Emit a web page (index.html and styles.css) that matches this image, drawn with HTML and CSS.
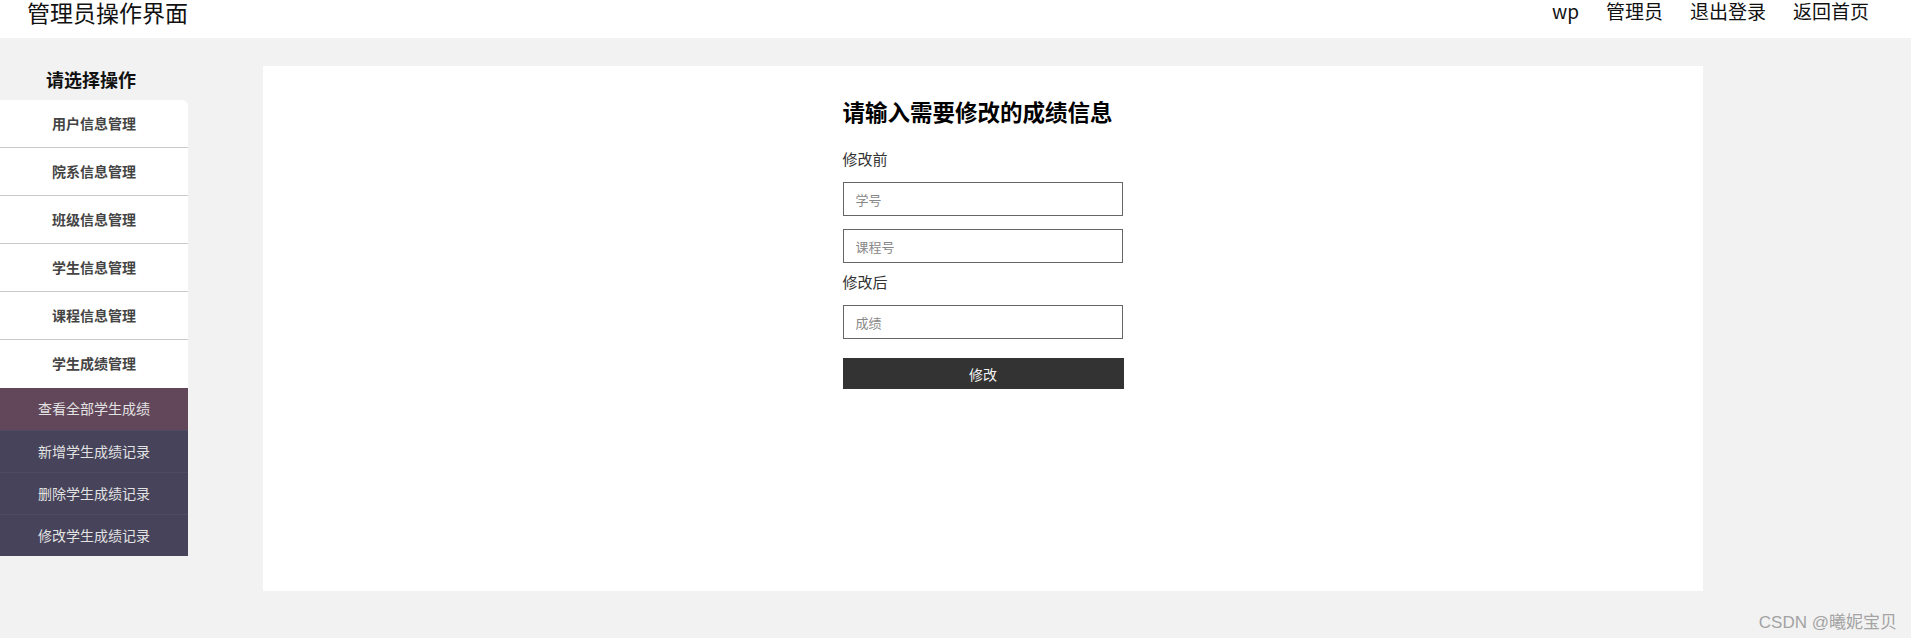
FILE: index.html
```html
<!DOCTYPE html>
<html lang="zh-CN">
<head>
  <meta charset="UTF-8">
  <title>管理员操作界面</title>
  <link rel="stylesheet" href="styles.css">
</head>
<body>

  <!-- 顶部 -->
  <div class="header">
    <div class="title">管理员操作界面</div>
    <div class="user-nav">
      <span>wp</span>
      <span>管理员</span>
      <span>退出登录</span>
      <span>返回首页</span>
    </div>
  </div>

  <div class="container">
    <!-- 左侧菜单 -->
    <div class="sidebar">
      <div class="sidebar-title">请选择操作</div>
      <ul class="menu">
        <li>用户信息管理</li>
        <li>院系信息管理</li>
        <li>班级信息管理</li>
        <li>学生信息管理</li>
        <li>课程信息管理</li>
        <li class="last">学生成绩管理</li>
      </ul>
      <ul class="submenu">
        <li class="current">查看全部学生成绩</li>
        <li>新增学生成绩记录</li>
        <li>删除学生成绩记录</li>
        <li>修改学生成绩记录</li>
      </ul>
    </div>

    <!-- 右侧内容 -->
    <div class="content">
      <form class="edit-form" onsubmit="return false">
        <h2>请输入需要修改的成绩信息</h2>
        <p class="label first">修改前</p>
        <input type="text" placeholder="学号">
        <input type="text" class="gap" placeholder="课程号">
        <p class="label">修改后</p>
        <input type="text" placeholder="成绩">
        <button type="submit">修改</button>
      </form>
    </div>
  </div>

  <div class="watermark">CSDN @曦妮宝贝</div>

</body>
</html>
```

FILE: styles.css
```css
* {
  box-sizing: border-box;
}
body {
  margin: 0;
  padding: 0;
  background: #f2f2f2;
  font-family: "Noto Sans CJK SC", sans-serif;
  color: #333;
  height: 638px;
  overflow: hidden;
}

/* 顶部 */
.header {
  height: 38px;
  background: #fff;
  display: flex;
  justify-content: space-between;
  align-items: flex-start;
  padding: 0 42px 0 27px;
}
.header .title {
  font-size: 23px;
  line-height: 24px;
  color: #111;
}
.user-nav {
  display: flex;
  gap: 27px;
  font-size: 19px;
  line-height: 21px;
  color: #111;
}

/* 主体 */
.container {
  display: flex;
  align-items: flex-start;
}
.sidebar {
  width: 188px;
}
.sidebar-title {
  padding: 28px 6px 0 0;
  margin-bottom: 8px;
  line-height: 26px;
  font-size: 18px;
  font-weight: bold;
  text-align: center;
  color: #111;
}
.menu, .submenu {
  list-style: none;
  margin: 0;
  padding: 0;
}
.menu {
  background: #fff;
  border-top-right-radius: 6px;
}
.menu li {
  height: 48px;
  line-height: 46px;
  border-bottom: 1px solid #c9c9c9;
  text-align: center;
  font-size: 14px;
  font-weight: bold;
  color: #444;
}
.menu li.last {
  border-bottom: none;
  line-height: 47px;
}
.submenu {
  background: #46435a;
}
.submenu li {
  height: 42px;
  line-height: 41px;
  text-align: center;
  font-size: 14px;
  color: #e2e2e2;
  border-top: 1px solid #4f4b64;
}
.submenu li:first-child {
  border-top: none;
}
.submenu li.current {
  background: #62475b;
}

.content {
  margin: 28px 0 0 75px;
  width: 1440px;
  height: 525px;
  background: #fff;
  padding-top: 30px;
}
.edit-form {
  width: 281px;
  margin: 0 auto;
}
.edit-form h2 {
  margin: 0;
  font-size: 22.5px;
  line-height: 30px;
  color: #000;
}
.edit-form .label {
  margin: 9px 0 13px;
  font-size: 15px;
  line-height: 20px;
  color: #333;
}
.edit-form .label.first {
  margin-top: 23px;
}
.edit-form input {
  display: block;
  width: 280px;
  height: 34px;
  border: 1px solid #666;
  padding: 0 12px;
  margin: 0;
  font-size: 13px;
  font-family: "Noto Sans CJK SC", sans-serif;
  outline: none;
}
.edit-form input::placeholder {
  color: #888;
}
.edit-form input.gap {
  margin-top: 13px;
}
.edit-form button {
  display: block;
  width: 281px;
  height: 31px;
  margin-top: 19px;
  border: none;
  background: #333;
  color: #f2f2f2;
  font-size: 14px;
  font-family: "Noto Sans CJK SC", sans-serif;
  cursor: pointer;
}

.watermark {
  position: absolute;
  right: 14px;
  top: 608px;
  font-family: "Liberation Sans", "Noto Sans CJK SC", sans-serif;
  font-size: 17px;
  color: #a3a3a3;
}
```
